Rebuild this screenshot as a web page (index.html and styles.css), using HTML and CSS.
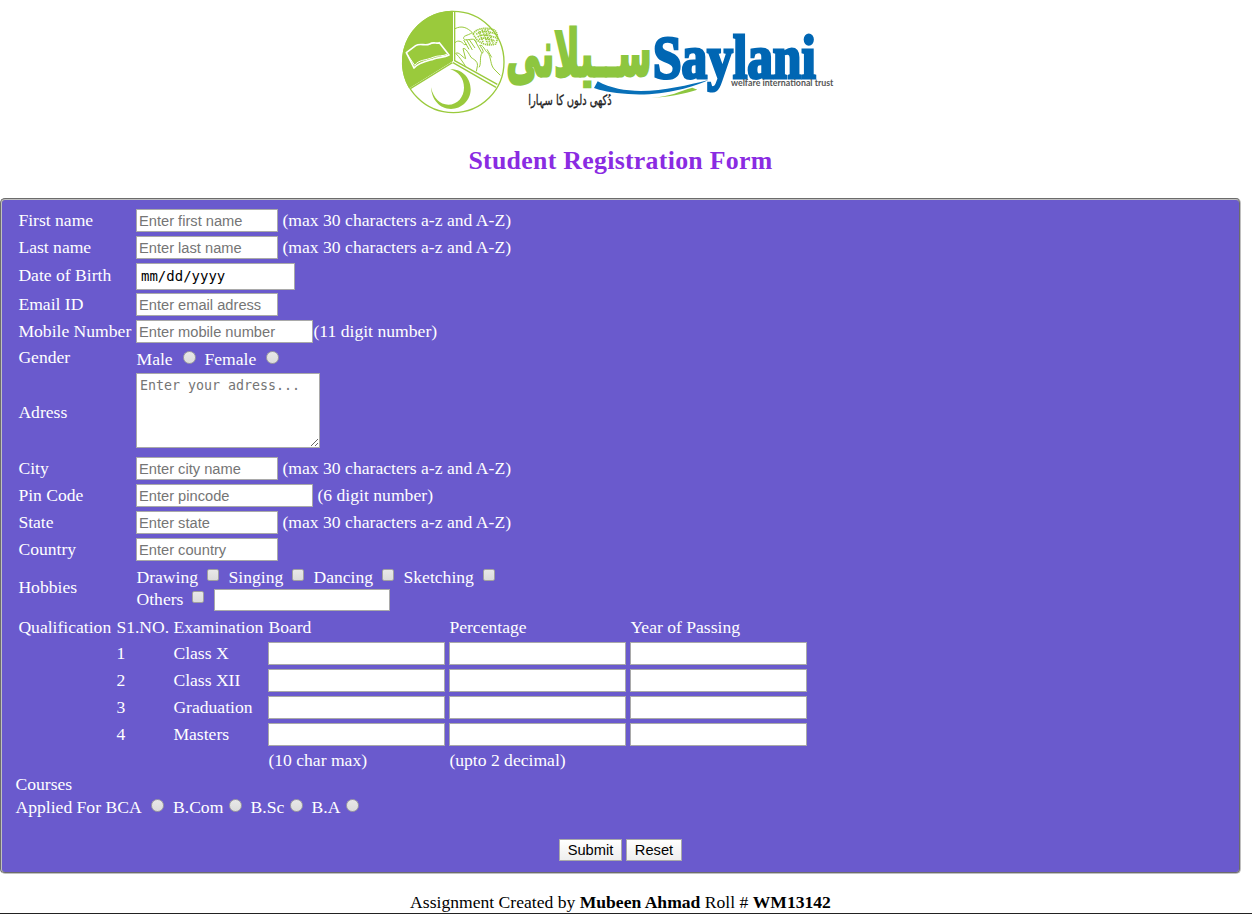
FILE: index.html
```html
<!DOCTYPE html>
<html lang="en">
<head>
<meta charset="utf-8">
<title>Student Registration Form</title>
<link rel="stylesheet" href="styles.css">
</head>
<body>
<div class="page">
  <header class="header">
    <svg class="logo" viewBox="0 0 1380 375" role="img" aria-label="Saylani welfare international trust">
      <g fill="none" stroke="#9aca3c" stroke-width="4" stroke-linejoin="round">
        <circle cx="175" cy="186" r="152"/>
        <path d="M172 182V34A152 152 0 0 0 43 262Z" fill="#9aca3c"/>
        <path d="M179 34V182L307 253M174 188L303 262M172 188L46 266"/>
        <path d="M34 158L62 137C76 128 90 139 104 132C115 125 125 132 133 128L162 165C146 174 130 170 114 178C92 184 70 188 57 204Z" stroke="#fff" stroke-width="5"/>
        <path d="M36 162L59 196C72 178 92 182 114 172C130 165 144 170 157 162" stroke="#fff" stroke-width="3"/>
        <path d="M180 86C200 76 216 82 232 98M180 128C190 118 202 126 208 134L216 133M232 98C216 108 204 106 206 116C212 124 224 116 236 118L246 128M206 120L222 148M214 118L232 150M222 118L240 144M238 118L260 158C270 160 262 146 254 136C266 134 268 152 278 158C290 172 284 196 300 210L316 226M182 160C194 172 204 186 212 200M182 160C192 154 202 172 212 176L204 146C212 142 222 162 228 172C238 180 252 184 246 204L244 214M262 158C252 170 260 192 252 202M276 148L290 172" stroke-width="3"/>
        <g stroke-width="5" stroke-dasharray="4 2">
          <path d="M234 102C246 84 270 82 292 88C310 92 310 116 302 132C280 138 266 134 247 121Z"/>
          <path d="M244 103C260 89 286 95 304 103M248 111C266 99 284 107 303 113M252 119C268 109 285 118 300 123M252 94L264 126M261 89L278 131M270 88L286 132M278 88L294 130"/>
        </g>
      </g>
      <path d="M165 208C208 207 227 240 227 268C227 301 200 327 168 327C135 327 110 300 108 262C115 295 135 314 160 314C188 314 207 290 207 263C207 235 190 215 165 208Z" fill="#9aca3c"/>
      <text class="urdu" x="552" y="228" textLength="436" lengthAdjust="spacingAndGlyphs">ســیلانی</text>
      <path d="M608 244C704 297 842 265 940 240C897 263 787 290 700 282C651 279 612 270 597 264Z" fill="#0870b8"/>
      <path d="M768 293C827 290 855 273 892 263L907 269C869 281 812 292 768 293Z" fill="#8dc63f"/>
      <text class="brand" x="774" y="233" textLength="488" lengthAdjust="spacingAndGlyphs">Saylani</text>
      <text class="motto" x="525" y="315" textLength="250" lengthAdjust="spacingAndGlyphs">دُکھی دلوں کا سہارا</text>
      <text class="tagline" x="1008" y="259" textLength="307" lengthAdjust="spacingAndGlyphs">welfare international trust</text>
    </svg>
    <h1 class="title">Student Registration Form</h1>
  </header>

  <form class="panel">
    <div class="row"><label>First name</label><div class="field"><input class="box" placeholder="Enter first name"><span class="hint">(max 30 characters a-z and A-Z)</span></div></div>
    <div class="row"><label>Last name</label><div class="field"><input class="box" placeholder="Enter last name"><span class="hint">(max 30 characters a-z and A-Z)</span></div></div>
    <div class="row row-date"><label>Date of Birth</label><div class="field"><input class="box date" value="mm/dd/yyyy"></div></div>
    <div class="row"><label>Email ID</label><div class="field"><input class="box" placeholder="Enter email adress"></div></div>
    <div class="row"><label>Mobile Number</label><div class="field"><input class="box wide" placeholder="Enter mobile number"><span class="hint tight">(11 digit number)</span></div></div>
    <div class="row row-gender"><label>Gender</label>
      <div class="options gender"><label class="option">Male<i class="radio"></i></label><label class="option">Female<i class="radio"></i></label></div>
    </div>
    <div class="row row-address"><label>Adress</label><div class="field"><textarea class="box area" placeholder="Enter your adress..."></textarea></div></div>
    <div class="row"><label>City</label><div class="field"><input class="box" placeholder="Enter city name"><span class="hint">(max 30 characters a-z and A-Z)</span></div></div>
    <div class="row"><label>Pin Code</label><div class="field"><input class="box wide" placeholder="Enter pincode"><span class="hint">(6 digit number)</span></div></div>
    <div class="row"><label>State</label><div class="field"><input class="box" placeholder="Enter state"><span class="hint">(max 30 characters a-z and A-Z)</span></div></div>
    <div class="row"><label>Country</label><div class="field"><input class="box" placeholder="Enter country"></div></div>
    <div class="row row-hobbies"><label>Hobbies</label>
      <div>
        <div class="options hobbies"><label class="option">Drawing<i class="check"></i></label><label class="option">Singing<i class="check"></i></label><label class="option">Dancing<i class="check"></i></label><label class="option">Sketching<i class="check"></i></label></div>
        <div class="options others"><label class="option">Others<i class="check"></i></label><input class="box other"></div>
      </div>
    </div>

    <div class="marks marks-head"><span>Qualification</span><span>S1.NO.</span><span>Examination</span><span>Board</span><span>Percentage</span><span>Year of Passing</span></div>
    <div class="marks"><span></span><span>1</span><span>Class X</span><input class="box wide"><input class="box wide"><input class="box wide"></div>
    <div class="marks"><span></span><span>2</span><span>Class XII</span><input class="box wide"><input class="box wide"><input class="box wide"></div>
    <div class="marks"><span></span><span>3</span><span>Graduation</span><input class="box wide"><input class="box wide"><input class="box wide"></div>
    <div class="marks"><span></span><span>4</span><span>Masters</span><input class="box wide"><input class="box wide"><input class="box wide"></div>
    <div class="marks marks-foot"><span></span><span></span><span></span><span>(10 char max)</span><span>(upto 2 decimal)</span><span></span></div>

    <div class="courses">
      <div class="courses-label">Courses</div>
      <div class="options course-list"><label class="option">Applied For BCA<i class="radio"></i></label><label class="option">B.Com<i class="radio"></i></label><label class="option">B.Sc<i class="radio"></i></label><label class="option">B.A<i class="radio"></i></label></div>
    </div>
    <div class="actions"><button class="btn submit" type="button">Submit</button><button class="btn reset" type="button">Reset</button></div>
  </form>
  <footer class="footer">Assignment Created by <b>Mubeen Ahmad</b> Roll # <b>WM13142</b></footer>
</div>
</body>
</html>
```
FILE: styles.css
```css
* { box-sizing: border-box; }
body {
  margin: 0;
  background: #fff;
  color: #000;
  font: 17.6px/20px "Liberation Serif", "Times New Roman", serif;
}
.page {
  height: 914px;
  overflow: hidden;
  border-bottom: 1px solid #222;
}
.header { width: 1241px; height: 198px; }
.logo { display: block; width: 460px; height: 125px; margin-left: 395px; }
.urdu {
  font: bold 195px "DejaVu Sans", sans-serif;
  fill: #8dc63f;
  stroke: #8dc63f;
  stroke-width: 9;
  direction: rtl;
  text-anchor: middle;
}
.brand { font: bold 184px "Liberation Serif", serif; fill: #0066b3; stroke: #0066b3; stroke-width: 9; }
.motto { font: 42px "DejaVu Sans", sans-serif; fill: #222; stroke: #222; stroke-width: 1; direction: rtl; text-anchor: middle; }
.tagline { font: bold 27px Lato, sans-serif; fill: #555; }
.title {
  margin: 20px 0 0;
  color: #8a2be2;
  font-size: 25.8px;
  line-height: 31px;
  letter-spacing: .3px;
  text-align: center;
}
.panel {
  width: 1241px;
  height: 676px;
  padding: 7px 14px 0 16px;
  border: 2px groove #c0c0c0;
  border-radius: 5px;
  background: #6a5acd;
  color: #fff;
}
.row {
  display: grid;
  grid-template-columns: 118px 1fr;
  align-items: center;
  height: 27px;
}
.row > label, .hint { padding: 0 0 2px .4px; }
.row-date { height: 30px; }
.row-date > label { padding-bottom: 2px; }
.row-gender > label { padding-bottom: 3px; }
.row-address { height: 83px; }
.row-address > label { padding-bottom: 3px; }
.row-hobbies { height: 50px; }
.field { display: flex; align-items: center; }
.row-address .field { padding-bottom: 6px; }
.hint { margin-left: 4px; letter-spacing: .02px; }
.hint.tight { margin-left: 0; }
.box {
  display: block;
  width: 142px;
  height: 23px;
  padding: 1px 2px;
  border: 1px solid #a9a9a9;
  border-radius: 0;
  background: #fff;
  color: #000;
  font: 14.67px "Liberation Sans", Arial, sans-serif;
}
.box::placeholder { color: #757575; }
.wide { width: 177px; }
.date { width: 159px; height: 27px; padding-left: 4px; font: 14px "DejaVu Sans Mono", monospace; }
.area { width: 184px; height: 75px; padding: 4px 3px 3px; font: 13.3px "DejaVu Sans Mono", monospace; }
.options { display: grid; align-items: center; }
.option { display: flex; justify-content: space-between; align-items: center; padding-left: .5px; white-space: nowrap; }
.gender { grid-template-columns: 60px 75px; column-gap: 8px; }
.hobbies { grid-template-columns: 83px 76px 81px 92px; column-gap: 9px; height: 24px; }
.others { grid-template-columns: 68px 176px; column-gap: 10px; height: 22px; }
.others .option { padding-bottom: 2px; }
.other { width: 176px; height: 22px; }
.radio, .check {
  flex: none;
  width: 13px;
  height: 13px;
  margin-bottom: 3px;
  border: 1px solid #a0a0a0;
  background: linear-gradient(#e8e8e8, #dcdcdc);
}
.radio { border-radius: 50%; }
.check { width: 12px; height: 12px; margin-bottom: 4px; border-radius: 2px; }
.marks {
  display: grid;
  grid-template-columns: 98px 57px 95px 181px 181px 177px;
  align-items: center;
  height: 27px;
}
.marks span { padding: 0 0 2px .4px; }
.marks-head span { padding-bottom: 0; }
.marks-foot { height: 26px; }
.courses { margin-left: -3px; }
.courses-label { padding-left: .5px; }
.course-list { grid-template-columns: 149.5px 69.5px 53px 48px; column-gap: 8px; height: 25px; }
.course-list .option:first-child { padding-right: .5px; }
.actions { display: flex; justify-content: center; gap: 4px; margin: 20px 2px 0 0; }
.btn {
  height: 22px;
  padding: 0;
  border: 1px solid #a9a9a9;
  border-radius: 0;
  background: linear-gradient(#fff, #eee);
  color: #000;
  font: 14.67px "Liberation Sans", Arial, sans-serif;
}
.submit { width: 63px; }
.reset { width: 56px; }
.footer { width: 1241px; padding-top: 18px; text-align: center; }
```
